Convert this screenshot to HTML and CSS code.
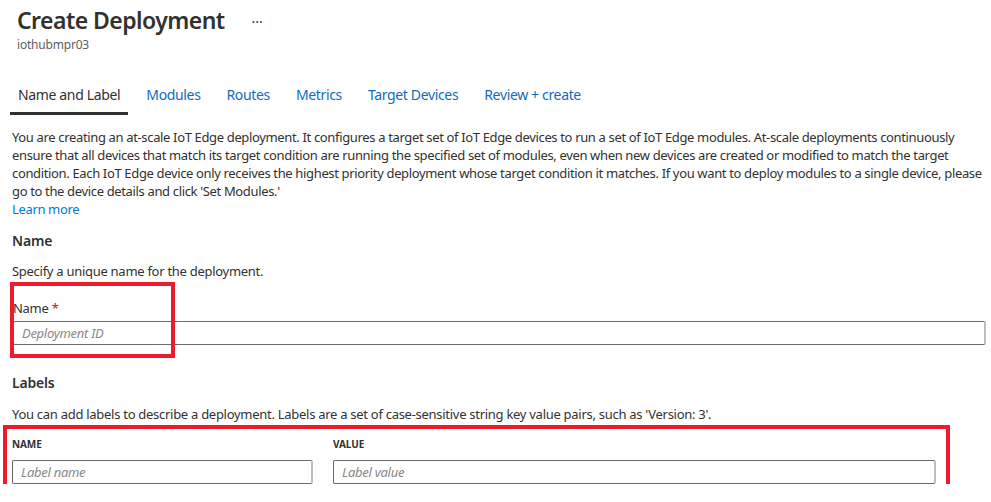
FILE: index.html
```html
<!DOCTYPE html>
<html>
<head>
<meta charset="utf-8">
<link rel="stylesheet" href="styles.css">
</head>
<body>
<div class="page">
  <header class="header">
    <div class="title-row">
      <h1 class="title">Create Deployment</h1>
      <span class="more">···</span>
    </div>
    <div class="subtitle">iothubmpr03</div>
  </header>
  <nav class="tabs">
    <span class="tab active">Name and Label</span>
    <span class="tab">Modules</span>
    <span class="tab">Routes</span>
    <span class="tab">Metrics</span>
    <span class="tab">Target Devices</span>
    <span class="tab">Review + create</span>
  </nav>
  <p class="intro">You are creating an at-scale IoT Edge deployment. It configures a target set of IoT Edge devices to run a set of IoT Edge modules. At-scale deployments continuously ensure that all devices that match its target condition are running the specified set of modules, even when new devices are created or modified to match the target condition. Each IoT Edge device only receives the highest priority deployment whose target condition it matches. If you want to deploy modules to a single device, please go to the device details and click 'Set Modules.'<br><a class="link">Learn more</a></p>

  <h2 class="section">Name</h2>
  <p class="desc">Specify a unique name for the deployment.</p>
  <div class="field">
    <div class="field-label">Name <span class="req">*</span></div>
    <div class="input wide"><span class="ph">Deployment ID</span></div>
    <div class="mark mark-name"></div>
  </div>

  <h2 class="section labels-h">Labels</h2>
  <p class="desc desc-labels">You can add labels to describe a deployment. Labels are a set of case-sensitive string key value pairs, such as 'Version: 3'.</p>
  <div class="grid">
    <div class="col col-name">
      <div class="col-head">NAME</div>
      <div class="input"><span class="ph">Label name</span></div>
    </div>
    <div class="col col-value">
      <div class="col-head">VALUE</div>
      <div class="input"><span class="ph">Label value</span></div>
    </div>
    <div class="mark mark-labels"></div>
  </div>
</div>
</body>
</html>
```
FILE: styles.css
```css
html, body {
  margin: 0;
  padding: 0;
  background: #ffffff;
}
body {
  font-family: "Noto Sans", "Open Sans", sans-serif;
  color: #323130;
  font-size: 13px;
  letter-spacing: -0.28px;
}
.page {
  padding: 0 5px 0 12px;
  position: relative;
}
.header {
  padding-left: 5px;
}
.title-row {
  display: flex;
  align-items: center;
  height: 40px;
}
.title {
  margin: 0;
  font-size: 23px;
  font-weight: 600;
  line-height: 28px;
  letter-spacing: -0.55px;
  color: #323130;
}
.more {
  margin-left: 27px;
  font-size: 14px;
  color: #323130;
  letter-spacing: 0;
  padding-top: 2px;
}
.subtitle {
  font-size: 12px;
  color: #605e5c;
  line-height: 16px;
  margin-top: -3px;
  letter-spacing: -0.2px;
}
.tabs {
  display: flex;
  margin-top: 24px;
  margin-left: -2px;
}
.tab {
  font-size: 14px;
  line-height: 20px;
  padding: 8px 8px 7px;
  margin-right: 10px;
  color: #0f6cbd;
  letter-spacing: -0.35px;
  border-bottom: 3px solid transparent;
}
.tab.active {
  color: #323130;
  border-bottom-color: #323130;
}
.intro {
  margin: 13px 0 0;
  line-height: 18px;
  letter-spacing: -0.35px;
}
.link {
  color: #0078d4;
}
.section {
  margin: 13px 0 0;
  font-size: 14px;
  font-weight: 600;
  line-height: 20px;
  letter-spacing: -0.2px;
}
.desc {
  margin: 11px 0 0;
  line-height: 18px;
}
.desc-labels {
  margin-top: 12px;
}
.field {
  position: relative;
  margin-top: 19px;
}
.field-label {
  line-height: 18px;
  margin-left: 1px;
}
.req {
  color: #c50f1f;
}
.input {
  box-sizing: border-box;
  height: 24px;
  border: 1px solid #6b6b6b;
  border-right: 2px solid #bdbdbd;
  border-radius: 2px;
  padding: 0 8px;
  display: flex;
  align-items: center;
  background: #fff;
}
.input.wide {
  margin-top: 4px;
  margin-left: 1px;
}
.ph {
  font-style: italic;
  color: #8a8886;
  font-size: 13px;
}
.labels-h {
  margin-top: 28px;
}
.grid {
  position: relative;
  display: grid;
  grid-template-columns: 301px 603px;
  column-gap: 20px;
  margin-top: 7px;
}
.col-head {
  font-size: 10px;
  font-weight: 700;
  line-height: 16px;
  letter-spacing: -0.1px;
  margin-top: 6px;
  margin-bottom: 8px;
}
.mark {
  position: absolute;
  border: 4px solid #ec1c2a;
  pointer-events: none;
}
.mark-name {
  left: -2px;
  top: -17px;
  width: 157px;
  height: 68px;
}
.mark-labels {
  left: -9px;
  top: -5px;
  width: 939px;
  height: 65px;
}
```
